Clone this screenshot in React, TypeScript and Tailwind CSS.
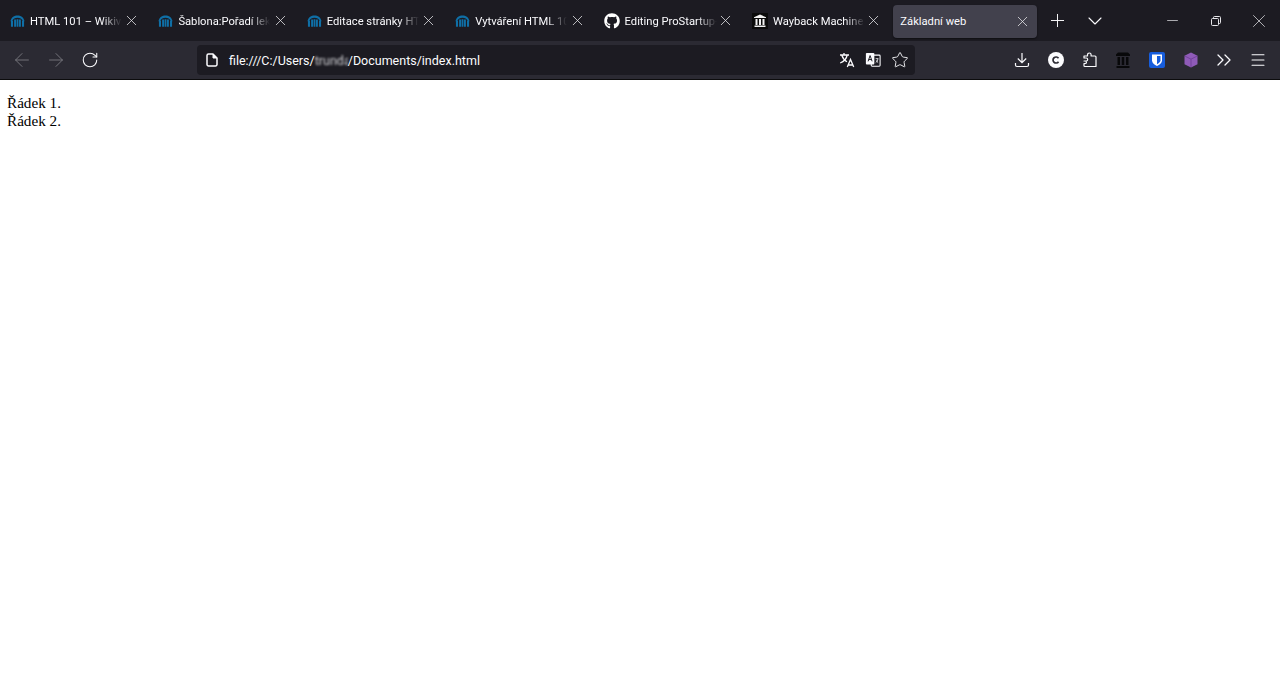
import { ArrowLeft, ArrowRight, ChevronDown, ChevronsRight, Menu, Minus, Plus, RotateCw, Star, X } from "lucide-react";
import { FaGithub } from "react-icons/fa";

function WikiIcon() {
  return (
    <svg width="15" height="16" viewBox="0 0 16 16" className="shrink-0">
      <path d="M0.500 8.200C1.600 3.600 4.400 2 8 2s6.400 1.600 7.500 6.200h-2C12.600 5.600 10.600 4.600 8 4.600S3.400 5.600 2.500 8.200z" fill="#0f6fa6" />
      <path d="M1 8h2.200v6H1zM4.400 6.500h2v7.500h-2zM7 6h2v8H7zM9.600 6.500h2v7.500h-2zM12.800 8H15v6h-2.200z" fill="#0f6fa6" />
    </svg>
  );
}

function WaybackIcon() {
  return (
    <svg width="16" height="16" viewBox="0 0 16 16" className="shrink-0">
      <rect width="16" height="16" fill="#0b0b0b" />
      <path d="M8 1.500L14 4.200V5H2v-.8zM2.500 12.500h11V14h-11zM3.500 6h2v6h-2zM7 6h2v6H7zM10.500 6h2v6h-2z" fill="#f2f2f2" />
    </svg>
  );
}

function CloseIcon() {
  return <X size={17} strokeWidth={1.1} className="shrink-0 text-[#e6e6ea]" />;
}

function Tab({ icon, title }: { icon: React.ReactNode; title: string }) {
  return (
    <div className="flex w-[144.4px] shrink-0 items-center pl-[7px] pr-[7px]">
      {icon}
      <span className="ml-[5px] w-[92px] overflow-hidden whitespace-nowrap pt-[2px] text-[11.2px] text-[#fbfbfe] [mask-image:linear-gradient(to_right,black_78%,transparent_100%)]">
        {title}
      </span>
      <span className="ml-auto"><CloseIcon /></span>
    </div>
  );
}

function DocIcon() {
  return (
    <svg width="16" height="16" viewBox="0 0 16 16" fill="none" stroke="#fbfbfe" strokeWidth="1.500" className="shrink-0">
      <path d="M3 3.500A1.500 1.500 0 0 1 4.500 2H9l4 4v6.500a1.500 1.500 0 0 1-1.500 1.500h-7A1.500 1.500 0 0 1 3 12.500z" strokeLinejoin="round" />
      <path d="M9 2v4h4" fill="#fbfbfe" strokeWidth="1" />
    </svg>
  );
}

function TranslateIcon() {
  return (
    <svg width="16" height="16" viewBox="0 0 16 16" fill="none" stroke="#fbfbfe" strokeWidth="1.300">
      <path d="M1 3h9M5 1v2M8.200 3C7.500 6.500 4.500 9.800 1.200 11M2.800 3.200c1 3 3 5.300 5.200 6.500" />
      <path d="M8.300 15l3.200-7.500L14.700 15M9.300 13h4.400" />
    </svg>
  );
}

function PageTranslateIcon() {
  return (
    <svg width="16" height="16" viewBox="0 0 18 18">
      <rect x="7" y="3.500" width="10" height="12.500" rx="1" fill="#1c1b22" stroke="#fbfbfe" strokeWidth="1.200" />
      <rect x="1" y="1" width="9.500" height="13" rx="1" fill="#fbfbfe" />
      <path d="M3.500 10.500L5.700 4l2.300 6.500M4.300 8.500h2.800" fill="none" stroke="#1c1b22" strokeWidth="1.100" />
      <path d="M12 7.500h3M14.500 7.500c-.2 2-1 3.500-2.500 4.500M12.800 9.500c.4 1 1 1.800 2 2.500" fill="none" stroke="#fbfbfe" strokeWidth="0.900" />
    </svg>
  );
}

function DownloadIcon() {
  return (
    <svg width="16" height="16" viewBox="0 0 16 16" fill="none" stroke="#fbfbfe" strokeWidth="1.200">
      <path d="M8 1v9.500M3.800 6.500L8 10.700l4.200-4.200" />
      <path d="M1.500 11v2a1.500 1.500 0 0 0 1.500 1.500h10a1.500 1.500 0 0 0 1.500-1.500v-2" />
    </svg>
  );
}

function CopyrightIcon() {
  return (
    <svg width="16" height="16" viewBox="0 0 16 16">
      <circle cx="8" cy="8" r="8" fill="#fbfbfe" />
      <path d="M10.500 6.300A3 3 0 1 0 10.500 9.700" fill="none" stroke="#2b2a33" strokeWidth="1.700" />
    </svg>
  );
}

function PuzzleIcon() {
  return (
    <svg width="16" height="16" viewBox="0 0 16 16" fill="none" stroke="#fbfbfe" strokeWidth="1.200" strokeLinejoin="round">
      <path d="M2 9h2.200a1.500 1.500 0 0 0 0-3H2V4h3.500V2.800a1.800 1.800 0 0 1 3.600 0V4H13a1 1 0 0 1 1 1v9.500H2.800a.8.800 0 0 1-.8-.8V11.500h1.200a1.200 1.200 0 0 0 0-2.500z" />
    </svg>
  );
}

function ArchiveIcon() {
  return (
    <svg width="16" height="16" viewBox="0 0 16 16">
      <path d="M3 0.500h10L15 2.500V4H1V2.500zM1.500 14h13v2h-13zM2.500 5h2.500v8H2.500zM6.800 5h2.400v8H6.800zM11 5h2.500v8H11z" fill="#08080a" />
    </svg>
  );
}

function BitwardenIcon() {
  return (
    <svg width="16" height="16" viewBox="0 0 16 16">
      <rect width="16" height="16" rx="2" fill="#175ddc" />
      <path d="M3 2.500h10v6c0 2.500-2.500 4.300-5 5.500-2.500-1.200-5-3-5-5.500z" fill="#fff" />
      <path d="M8 4h3.500v4.500c0 1.500-1.800 2.800-3.500 3.700z" fill="#175ddc" />
    </svg>
  );
}

function CubeIcon() {
  return (
    <svg width="16" height="16" viewBox="0 0 16 16">
      <path d="M8 0.500l6.500 3.300v8.400L8 15.500l-6.500-3.300V3.800z" fill="#8f5bb8" />
      <path d="M1.800 4L8 7.200 14.200 4M8 7.200v8" fill="none" stroke="#6f3f96" strokeWidth="0.900" />
    </svg>
  );
}

function RestoreIcon() {
  return (
    <svg width="12" height="12" viewBox="0 0 12 12" fill="none" stroke="#e6e6ea" strokeWidth="1">
      <rect x="1.500" y="3.500" width="7" height="7" rx="1" />
      <path d="M3.500 3.500V2.500a1 1 0 0 1 1-1h5a1 1 0 0 1 1 1v5a1 1 0 0 1-1 1h-1" />
    </svg>
  );
}

function ToolButton({ children, className }: { children: React.ReactNode; className?: string }) {
  return <div className={`flex h-full items-center justify-center ${className ?? "w-[33.7px]"}`}>{children}</div>;
}

export default function App() {
  return (
    <div className="flex min-h-[675px] flex-col bg-white font-['Roboto','Noto_Sans',sans-serif]">
      {/* Tab strip */}
      <div className="flex h-[41px] items-center bg-[#1c1b22]">
        <div className="flex h-[37px] items-center gap-[4px] pl-[3px] pt-px">
          <Tab icon={<WikiIcon />} title="HTML 101 – Wikiverzita" />
          <Tab icon={<WikiIcon />} title="Šablona:Pořadí lekcí" />
          <Tab icon={<WikiIcon />} title="Editace stránky HTML 101" />
          <Tab icon={<WikiIcon />} title="Vytváření HTML 101" />
          <Tab icon={<FaGithub size={16} className="shrink-0 text-white" />} title="Editing ProStartup-" />
          <Tab icon={<WaybackIcon />} title="Wayback Machine" />
          <div className="flex h-[33px] w-[144px] shrink-0 items-center justify-between rounded-[4px] bg-[#42414d] pl-[7px] pr-[6px] shadow-[0_1px_2px_rgba(0,0,0,0.5)]">
            <span className="pt-[2px] text-[11.2px] text-[#fbfbfe]">Základní web</span>
            <CloseIcon />
          </div>
        </div>
        <ToolButton className="ml-[3px] w-[34px]"><Plus size={21} strokeWidth={1.1} className="text-[#fbfbfe]" /></ToolButton>
        <ToolButton className="ml-[4px] w-[34px]"><ChevronDown size={24} strokeWidth={1.1} className="text-[#fbfbfe]" /></ToolButton>
        <div className="ml-auto flex h-full">
          <ToolButton className="w-[43px]"><Minus size={17} strokeWidth={1} className="text-[#e6e6ea]" /></ToolButton>
          <ToolButton className="w-[43px]"><RestoreIcon /></ToolButton>
          <ToolButton className="w-[43px]"><X size={22} strokeWidth={0.8} className="text-[#e6e6ea]" /></ToolButton>
        </div>
      </div>

      {/* Toolbar */}
      <div className="flex h-[39px] items-center border-b border-[#0c0c0d] bg-[#2b2a33] pl-[5px] pr-[5px]">
        <ToolButton className="w-[34px]"><ArrowLeft size={22} strokeWidth={1} className="text-[#7a7980]" /></ToolButton>
        <ToolButton className="w-[34px]"><ArrowRight size={22} strokeWidth={1} className="text-[#7a7980]" /></ToolButton>
        <ToolButton className="w-[34px]"><RotateCw size={18} strokeWidth={1.4} className="text-[#fbfbfe]" /></ToolButton>
        <div className="ml-[90px] flex h-[30px] w-[718px] items-center rounded-[4px] bg-[#1c1b22] pl-[7px] pr-[6px]">
          <DocIcon />
          <span className="ml-[9px] whitespace-nowrap pt-[3px] text-[12.5px] text-[#fbfbfe]">
            file:///C:/Users/<span className="inline-block w-[33px] overflow-hidden align-bottom text-[#d0d0d4] blur-[1.2px]">trunda</span>/Documents/index.html
          </span>
          <div className="ml-auto flex items-center gap-[10px]">
            <TranslateIcon />
            <PageTranslateIcon />
            <Star size={18} strokeWidth={1.2} className="text-[#fbfbfe]" />
          </div>
        </div>
        <div className="ml-auto flex h-full">
          <ToolButton><DownloadIcon /></ToolButton>
          <ToolButton><CopyrightIcon /></ToolButton>
          <ToolButton><PuzzleIcon /></ToolButton>
          <ToolButton><ArchiveIcon /></ToolButton>
          <ToolButton><BitwardenIcon /></ToolButton>
          <ToolButton><CubeIcon /></ToolButton>
          <ToolButton><ChevronsRight size={24} strokeWidth={1.3} className="text-[#fbfbfe]" /></ToolButton>
          <ToolButton><Menu size={18} strokeWidth={1.4} className="text-[#fbfbfe]" /></ToolButton>
        </div>
      </div>

      {/* Page */}
      <div className="pl-[7px] pt-[14px] font-['Liberation_Serif',serif] text-[15.2px] leading-[18px] text-black">
        <div>Řádek 1.</div>
        <div>Řádek 2.</div>
      </div>
    </div>
  );
}
